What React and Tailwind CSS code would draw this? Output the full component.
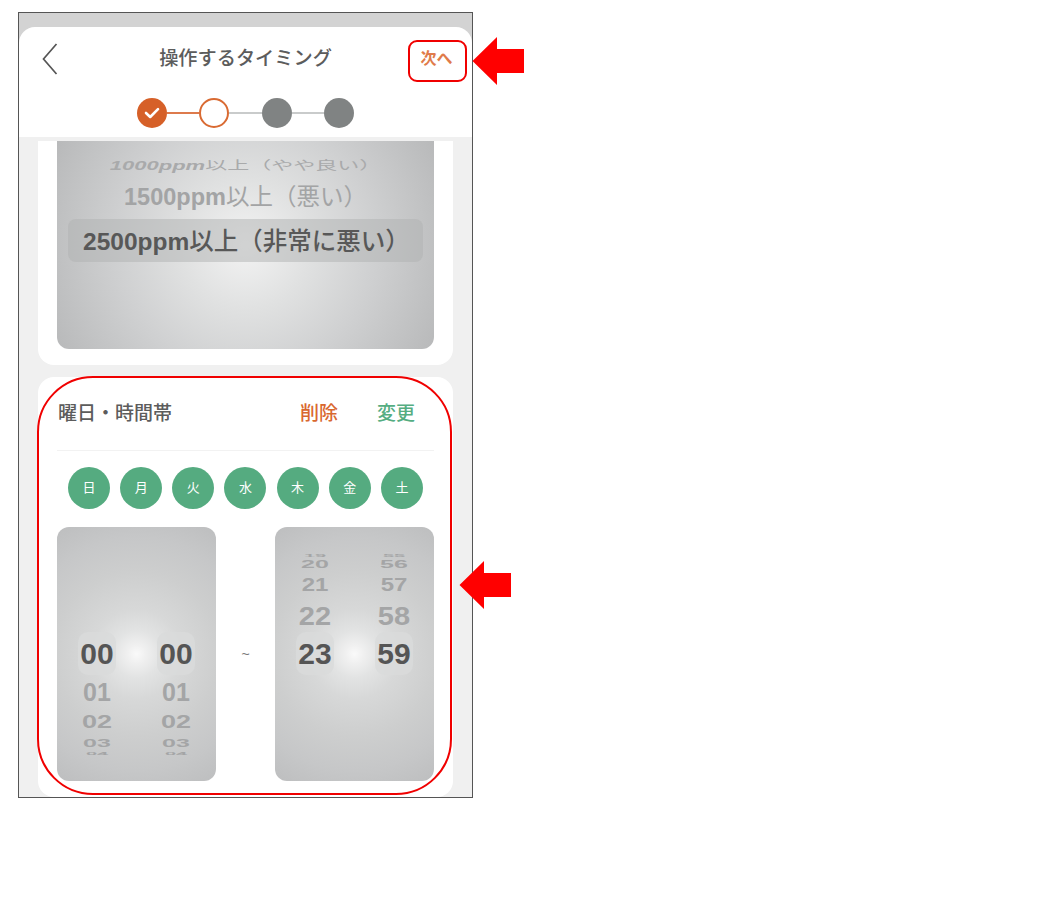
import React from 'react';

const FONT = "font-['Liberation_Sans','Noto_Sans_CJK_JP',sans-serif]";
const DAYS = ['日', '月', '火', '水', '木', '金', '土'];
const WHEEL_BG = 'bg-[radial-gradient(circle_at_center,#fafafa_0%,#f0f0f0_6%,#e2e3e3_16%,#d7d8d8_30%,#cdcece_55%,#c6c7c8_78%,#bdbebf_100%)]';

const Check = () => (
    <svg width="18" height="14" viewBox="0 0 18 14" fill="none">
        <path d="M3 7 L7.2 11 L15 3.2" stroke="#fff" strokeWidth="2.6" strokeLinecap="round" strokeLinejoin="round" />
    </svg>
);

const Stepper = () => (
    <div className="flex items-center justify-center">
        <div className="w-[30px] h-[30px] rounded-full bg-[#d66028] flex items-center justify-center"><Check /></div>
        <div className="w-[32px] h-[1.5px] bg-[#dd7a4c]" />
        <div className="w-[30px] h-[30px] rounded-full bg-white border-[2.5px] border-[#d96a32]" />
        <div className="w-[33px] h-[1.5px] bg-[#c9cbcb]" />
        <div className="w-[30px] h-[30px] rounded-full bg-[#808383]" />
        <div className="w-[32px] h-[1.5px] bg-[#c9cbcb]" />
        <div className="w-[30px] h-[30px] rounded-full bg-[#808383]" />
    </div>
);

const Header = () => (
    <div className="bg-white rounded-t-[16px] h-[110px] pt-[11px]">
        <div className="grid grid-cols-[65px_1fr_65px] items-center h-[42px]">
            <div className="pl-[22px]">
                <svg width="18" height="34" viewBox="0 0 18 34" fill="none">
                    <path d="M15.5 2 L2.5 17 L15.5 32" stroke="#555" strokeWidth="1.7" />
                </svg>
            </div>
            <div className="text-center text-[19.2px] font-medium text-[#5c5c5c]">操作するタイミング</div>
            <div className="w-[59px] text-center text-[16px] font-bold text-[#e07b4a]">次へ</div>
        </div>
        <div className="mt-[18px]"><Stepper /></div>
    </div>
);

// one line of a scroll wheel, squashed the further it is from the selected row
const WheelItem = ({ h, size, squash, children }) => (
    <div className={`flex items-center justify-center font-bold leading-none whitespace-nowrap text-[#a4a5a6] ${h} ${size} ${squash}`}>
        {children}
    </div>
);

const LevelPicker = () => (
    <div className="h-[208px] rounded-b-[12px] bg-[radial-gradient(circle_at_center,#f3f3f3_0%,#e0e1e1_30%,#cfd0d1_60%,#b8b9ba_100%)] px-[11px] pt-[14px]">
        <div className="h-[22px] flex items-center justify-center text-[22px] text-[#a9aaab] scale-y-[0.55] whitespace-nowrap">
            <span className="font-bold italic">1000ppm</span>以上（やや良い）
        </div>
        <div className="h-[42px] flex items-center justify-center text-[23.5px] text-[#a3a4a5] whitespace-nowrap">
            <span className="font-bold">1500ppm</span>以上（悪い）
        </div>
        <div className="h-[43px] rounded-[8px] bg-[#b0b1b2]/50 flex items-center pl-[15px] pt-[3px] text-[24.5px] font-medium text-[#585858] whitespace-nowrap">
            <span className="font-bold">2500ppm</span>以上（非常に悪い）
        </div>
    </div>
);

const Selected = ({ children }) => (
    <div className="h-[43px] w-[38px] rounded-[10px] bg-[#dadbdb]/80 flex items-center justify-center text-[30px] font-bold text-[#555]">
        {children}
    </div>
);

const StartColumn = () => (
    <div className="w-[40px] flex flex-col items-center pt-[105px]">
        <Selected>00</Selected>
        <WheelItem h="h-[34px]" size="text-[25px]" squash="">01</WheelItem>
        <WheelItem h="h-[26px]" size="text-[27px]" squash="scale-y-[0.7]">02</WheelItem>
        <WheelItem h="h-[16px]" size="text-[25px]" squash="scale-y-[0.45]">03</WheelItem>
        <WheelItem h="h-[5px]" size="text-[20px]" squash="scale-y-[0.2]">04</WheelItem>
    </div>
);

const EndColumn = ({ values }) => (
    <div className="w-[40px] flex flex-col items-center pt-[27px]">
        <WheelItem h="h-[4px]" size="text-[20px]" squash="scale-y-[0.2]">{values[0]}</WheelItem>
        <WheelItem h="h-[12px]" size="text-[25px]" squash="scale-y-[0.45]">{values[1]}</WheelItem>
        <WheelItem h="h-[30px]" size="text-[24px]" squash="scale-y-[0.8]">{values[2]}</WheelItem>
        <WheelItem h="h-[32px]" size="text-[29px]" squash="scale-y-[0.9]">{values[3]}</WheelItem>
        <Selected>{values[4]}</Selected>
    </div>
);

const TimeCard = () => (
    <div className="bg-white rounded-[16px] h-[420px]">
        <div className="mx-[19px] h-[74px] flex items-center border-b border-[#f2f2f2] pl-[1px] pr-[19px] pt-[2px]">
            <div className="flex-1 text-[19px] font-medium text-[#5c5c5c]">曜日・時間帯</div>
            <div className="text-[19px] font-medium text-[#d9682f]">削除</div>
            <div className="ml-[39px] text-[19px] font-medium text-[#55ad82]">変更</div>
        </div>
        <div className="flex justify-between pl-[30px] pr-[30px] mt-[16px]">
            {DAYS.map(day => (
                <div key={day} className="w-[42px] h-[42px] rounded-full bg-[#55ab80] flex items-center justify-center text-[13px] text-white">
                    {day}
                </div>
            ))}
        </div>
        <div className="flex justify-between items-center mx-[19px] mt-[18px]">
            <div className={`w-[159px] h-[254px] rounded-[12px] px-[20px] flex justify-between ${WHEEL_BG}`}>
                <StartColumn />
                <StartColumn />
            </div>
            <div className="text-[14px] text-[#777]">~</div>
            <div className={`w-[159px] h-[254px] rounded-[12px] px-[20px] flex justify-between ${WHEEL_BG}`}>
                <EndColumn values={['19', '20', '21', '22', '23']} />
                <EndColumn values={['55', '56', '57', '58', '59']} />
            </div>
        </div>
    </div>
);

const RedArrow = ({ className }) => (
    <svg className={className} width="52" height="48" viewBox="0 0 52 48">
        <path d="M0.5 24 L25 0 V12 H52 V36 H25 V48 Z" fill="#ff0000" />
    </svg>
);

export default function App() {
    return (
        <div className={`relative w-[1058px] h-[906px] bg-white pt-[12px] pl-[18px] ${FONT}`}>
            <div className="w-[455px] h-[786px] border border-[#555] bg-[#f0f0f0] overflow-hidden">
                <div className="bg-[#d3d3d3] pt-[14px]">
                    <Header />
                </div>
                <div className="px-[19px] pt-[4px] flex flex-col gap-[12px]">
                    <div className="bg-white rounded-b-[16px] px-[19px] pb-[16px]">
                        <LevelPicker />
                    </div>
                    <TimeCard />
                </div>
            </div>

            {/* annotations drawn on top of the screenshot */}
            <div className="absolute left-[408px] top-[40px] w-[59px] h-[42px] rounded-[9px] border-2 border-[#f00000]" />
            <div className="absolute left-[37px] top-[376px] w-[415px] h-[419px] rounded-[56px] border-2 border-[#f00000]" />
            <RedArrow className="absolute left-[472px] top-[37px]" />
            <RedArrow className="absolute left-[459px] top-[561px]" />
        </div>
    );
}
